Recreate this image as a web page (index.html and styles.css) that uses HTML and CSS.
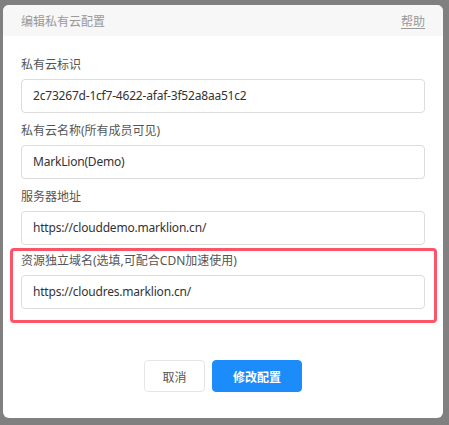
FILE: index.html
```html
<!DOCTYPE html>
<html lang="zh-CN">
<head>
<meta charset="utf-8">
<title>编辑私有云配置</title>
<link rel="stylesheet" href="styles.css">
</head>
<body>
<div class="dialog">
  <div class="dialog-header">
    <span class="dialog-title">编辑私有云配置</span>
    <a class="help-link">帮助</a>
  </div>
  <div class="dialog-body">
    <div class="field">
      <div class="field-label">私有云标识</div>
      <div class="field-input">2c73267d-1cf7-4622-afaf-3f52a8aa51c2</div>
    </div>
    <div class="field">
      <div class="field-label">私有云名称(所有成员可见)</div>
      <div class="field-input">MarkLion(Demo)</div>
    </div>
    <div class="field">
      <div class="field-label">服务器地址</div>
      <div class="field-input">https://clouddemo.marklion.cn/</div>
    </div>
    <div class="highlight">
      <div class="field last">
        <div class="field-label">资源独立域名(选填,可配合CDN加速使用)</div>
        <div class="field-input">https://cloudres.marklion.cn/</div>
      </div>
    </div>
  </div>
  <div class="dialog-footer">
    <button class="btn btn-cancel">取消</button>
    <button class="btn btn-primary">修改配置</button>
  </div>
</div>
</body>
</html>
```
FILE: styles.css
```css
html, body {
  margin: 0;
  padding: 0;
}
body {
  background: #808080;
  width: 449px;
  height: 425px;
  overflow: hidden;
  font-family: "Noto Sans", "Noto Sans CJK SC", sans-serif;
  font-size: 12px;
}
.dialog {
  margin: 5px 6px 0 3px;
  height: 413px;
  background: #fff;
  border-radius: 6px;
  overflow: hidden;
  display: flex;
  flex-direction: column;
}
.dialog-header {
  height: 31px;
  flex: none;
  background: #f7f7f7;
  padding: 0 18px;
  display: flex;
  align-items: center;
  justify-content: space-between;
}
.dialog-title {
  color: #999;
  font-size: 12px;
}
.help-link {
  color: #999;
  font-size: 12px;
  text-decoration: underline;
  text-underline-offset: 2px;
}
.dialog-body {
  padding: 19px 18px 0;
}
.field {
  margin-bottom: 8px;
}
.field.last {
  margin-bottom: 0;
}
.field-label {
  height: 20px;
  line-height: 20px;
  color: #555;
  font-size: 12px;
  margin-bottom: 4px;
}
.field-input {
  box-sizing: border-box;
  height: 34px;
  line-height: 32px;
  border: 1px solid #dcdcdc;
  border-radius: 4px;
  padding: 0 11px;
  color: #333;
  font-size: 12px;
  letter-spacing: -0.2px;
  white-space: nowrap;
}
.highlight {
  margin: -5px -12px 0 -11px;
  border: 3px solid #fe5468;
  border-radius: 4px;
  padding: 0 9px 11px 8px;
}
.dialog-footer {
  display: flex;
  justify-content: center;
  gap: 7px;
  margin-top: 37px;
}
.btn {
  height: 32px;
  box-sizing: border-box;
  border-radius: 4px;
  font-family: "Noto Sans CJK SC", "Noto Sans", sans-serif;
  font-size: 12px;
  padding: 0;
  cursor: pointer;
}
.btn-cancel {
  width: 61px;
  background: #fff;
  border: 1px solid #e6e6e6;
  color: #555;
}
.btn-primary {
  width: 90px;
  background: #1b8cfa;
  border: 1px solid #1b8cfa;
  color: #fff;
  font-weight: bold;
}
```
